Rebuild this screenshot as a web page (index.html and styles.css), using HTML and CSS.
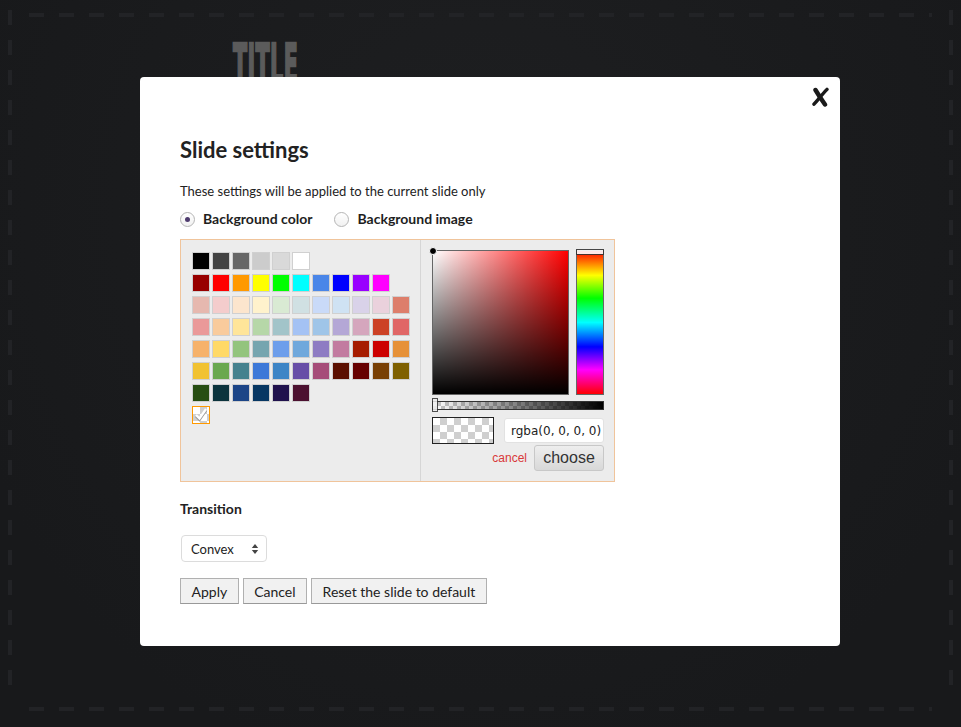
FILE: index.html
```html
<!DOCTYPE html>
<html lang="en">
<head>
<meta charset="UTF-8">
<meta name="viewport" content="width=device-width, initial-scale=1.0">
<title>Slide settings</title>
<link rel="stylesheet" href="styles.css">
</head>
<body>
  <div class="slide">
    <div class="slide-title">TITLE</div>
  </div>

  <div class="modal">
    <button class="modal-close" title="Close">
      <svg width="19" height="20" viewBox="0 0 19 20">
        <path d="M4.5 3 C7.5 8, 10.5 12.5, 14 17.5" stroke="#1a1a1a" stroke-width="4.4" stroke-linecap="round" fill="none"/>
        <path d="M16 2.4 C12 6.5, 8 11.5, 3 17.2" stroke="#1a1a1a" stroke-width="3.4" stroke-linecap="round" fill="none"/>
      </svg>
    </button>

    <h2 class="modal-title">Slide settings</h2>
    <p class="modal-hint">These settings will be applied to the current slide only</p>

    <div class="bg-options">
      <label class="bg-option"><span class="radio checked"></span>Background color</label>
      <label class="bg-option"><span class="radio"></span>Background image</label>
    </div>

    <div class="sp-container">
      <div class="sp-palette">
        <div class="sp-row">
          <span class="sp-thumb" style="background:#000000"></span>
          <span class="sp-thumb" style="background:#434343"></span>
          <span class="sp-thumb" style="background:#666666"></span>
          <span class="sp-thumb" style="background:#cccccc"></span>
          <span class="sp-thumb" style="background:#d9d9d9"></span>
          <span class="sp-thumb" style="background:#ffffff"></span>
        </div>
        <div class="sp-row">
          <span class="sp-thumb" style="background:#980000"></span>
          <span class="sp-thumb" style="background:#ff0000"></span>
          <span class="sp-thumb" style="background:#ff9900"></span>
          <span class="sp-thumb" style="background:#ffff00"></span>
          <span class="sp-thumb" style="background:#00ff00"></span>
          <span class="sp-thumb" style="background:#00ffff"></span>
          <span class="sp-thumb" style="background:#4a86e8"></span>
          <span class="sp-thumb" style="background:#0000ff"></span>
          <span class="sp-thumb" style="background:#9900ff"></span>
          <span class="sp-thumb" style="background:#ff00ff"></span>
        </div>
        <div class="sp-row">
          <span class="sp-thumb" style="background:#e6b8af"></span>
          <span class="sp-thumb" style="background:#f4cccc"></span>
          <span class="sp-thumb" style="background:#fce5cd"></span>
          <span class="sp-thumb" style="background:#fff2cc"></span>
          <span class="sp-thumb" style="background:#d9ead3"></span>
          <span class="sp-thumb" style="background:#d0e0e3"></span>
          <span class="sp-thumb" style="background:#c9daf8"></span>
          <span class="sp-thumb" style="background:#cfe2f3"></span>
          <span class="sp-thumb" style="background:#d9d2e9"></span>
          <span class="sp-thumb" style="background:#ead1dc"></span>
          <span class="sp-thumb" style="background:#dd7e6b"></span>
        </div>
        <div class="sp-row">
          <span class="sp-thumb" style="background:#ea9999"></span>
          <span class="sp-thumb" style="background:#f9cb9c"></span>
          <span class="sp-thumb" style="background:#ffe599"></span>
          <span class="sp-thumb" style="background:#b6d7a8"></span>
          <span class="sp-thumb" style="background:#a2c4c9"></span>
          <span class="sp-thumb" style="background:#a4c2f4"></span>
          <span class="sp-thumb" style="background:#9fc5e8"></span>
          <span class="sp-thumb" style="background:#b4a7d6"></span>
          <span class="sp-thumb" style="background:#d5a6bd"></span>
          <span class="sp-thumb" style="background:#cc4125"></span>
          <span class="sp-thumb" style="background:#e06666"></span>
        </div>
        <div class="sp-row">
          <span class="sp-thumb" style="background:#f6b26b"></span>
          <span class="sp-thumb" style="background:#ffd966"></span>
          <span class="sp-thumb" style="background:#93c47d"></span>
          <span class="sp-thumb" style="background:#76a5af"></span>
          <span class="sp-thumb" style="background:#6d9eeb"></span>
          <span class="sp-thumb" style="background:#6fa8dc"></span>
          <span class="sp-thumb" style="background:#8e7cc3"></span>
          <span class="sp-thumb" style="background:#c27ba0"></span>
          <span class="sp-thumb" style="background:#a61c00"></span>
          <span class="sp-thumb" style="background:#cc0000"></span>
          <span class="sp-thumb" style="background:#e69138"></span>
        </div>
        <div class="sp-row">
          <span class="sp-thumb" style="background:#f1c232"></span>
          <span class="sp-thumb" style="background:#6aa84f"></span>
          <span class="sp-thumb" style="background:#45818e"></span>
          <span class="sp-thumb" style="background:#3c78d8"></span>
          <span class="sp-thumb" style="background:#3d85c6"></span>
          <span class="sp-thumb" style="background:#674ea7"></span>
          <span class="sp-thumb" style="background:#a64d79"></span>
          <span class="sp-thumb" style="background:#5b0f00"></span>
          <span class="sp-thumb" style="background:#660000"></span>
          <span class="sp-thumb" style="background:#783f04"></span>
          <span class="sp-thumb" style="background:#7f6000"></span>
        </div>
        <div class="sp-row">
          <span class="sp-thumb" style="background:#274e13"></span>
          <span class="sp-thumb" style="background:#0c343d"></span>
          <span class="sp-thumb" style="background:#1c4587"></span>
          <span class="sp-thumb" style="background:#073763"></span>
          <span class="sp-thumb" style="background:#20124d"></span>
          <span class="sp-thumb" style="background:#4c1130"></span>
        </div>
        <div class="sp-row">
          <span class="sp-thumb sp-thumb-active checker">
            <svg width="16" height="16" viewBox="0 0 16 16">
              <path d="M3 9 L6.5 12.5 L13 3" stroke="#999" stroke-width="3" fill="none"/>
              <path d="M3 8 L6.5 11.5 L13 2" stroke="#fff" stroke-width="2.4" fill="none"/>
            </svg>
          </span>
        </div>
      </div>

      <div class="sp-picker">
        <div class="sp-top">
          <div class="sp-color">
            <div class="sp-sat"></div>
            <span class="sp-dragger"></span>
          </div>
          <div class="sp-hue">
            <span class="sp-slider"></span>
          </div>
        </div>
        <div class="sp-alpha checker-small">
          <div class="sp-alpha-inner"></div>
          <span class="sp-alpha-handle"></span>
        </div>
        <div class="sp-input-row">
          <div class="sp-preview checker"></div>
          <input class="sp-input" type="text" value="rgba(0, 0, 0, 0)">
        </div>
        <div class="sp-buttons">
          <a class="sp-cancel" href="#">cancel</a>
          <button class="sp-choose">choose</button>
        </div>
      </div>
    </div>

    <h3 class="section-label">Transition</h3>
    <div class="select-box">
      <span>Convex</span>
      <svg width="8" height="12" viewBox="0 0 8 12">
        <path d="M4 1 L7.2 5 L0.8 5 Z" fill="#444"/>
        <path d="M4 11 L7.2 7 L0.8 7 Z" fill="#444"/>
      </svg>
    </div>

    <div class="actions">
      <button class="btn">Apply</button>
      <button class="btn">Cancel</button>
      <button class="btn">Reset the slide to default</button>
    </div>
  </div>
</body>
</html>
```

FILE: styles.css
```css
html, body {
  height: 100%;
}

body {
  margin: 0;
  font-family: Lato, "Open Sans", sans-serif;
  color: #222;
  overflow: hidden;
  background-color: #1a1b1d;
  /* dashed frame around the slide area + soft vignette */
  background-image:
    repeating-linear-gradient(to right, #222326 0 15px, transparent 15px 30px),
    repeating-linear-gradient(to right, #222326 0 15px, transparent 15px 30px),
    repeating-linear-gradient(to bottom, #222326 0 15px, transparent 15px 30px),
    repeating-linear-gradient(to bottom, #222326 0 15px, transparent 15px 30px),
    radial-gradient(ellipse at 50% 30%, #1e1f21 0%, #18191b 80%);
  background-size:
    calc(100% - 58px) 4px,
    calc(100% - 58px) 4px,
    4px calc(100% - 40px),
    4px calc(100% - 40px),
    100% 100%;
  background-position:
    29px 13px,
    29px 707px,
    8px 10px,
    calc(100% - 8px) 10px,
    0 0;
  background-repeat: no-repeat;
}

.slide {
  padding: 36px 0 0 233px;
}

.slide-title {
  display: inline-block;
  font-family: "DejaVu Sans Condensed", "DejaVu Sans", sans-serif;
  font-weight: bold;
  font-size: 56px;
  line-height: 56px;
  color: #5b5b5b;
  -webkit-text-stroke: 2.5px #5b5b5b;
  letter-spacing: 1px;
  transform: scaleX(0.41);
  transform-origin: left top;
}

/* modal sits over the slide */
.modal {
  position: absolute;
  left: 140px;
  top: 77px;
  width: 700px;
  height: 569px;
  box-sizing: border-box;
  padding: 60px 40px 0 40px;
  background: #fff;
  border-radius: 4px;
}

.modal-close {
  position: absolute;
  top: 10px;
  right: 10px;
  padding: 0;
  border: none;
  background: none;
  cursor: pointer;
}

.modal-title {
  margin: 0;
  font-size: 22px;
  line-height: 26px;
  font-weight: bold;
  color: #222;
}

.modal-hint {
  margin: 20px 0 0 0;
  font-size: 13px;
  line-height: 16px;
}

.bg-options {
  display: flex;
  gap: 22px;
  margin-top: 11px;
}

.bg-option {
  display: flex;
  align-items: center;
  gap: 8px;
  font-size: 14px;
  line-height: 18px;
  font-weight: bold;
  color: #1e1e1e;
}

.radio {
  width: 15px;
  height: 15px;
  box-sizing: border-box;
  border-radius: 50%;
  border: 1px solid #b5b5b5;
  background: linear-gradient(#fff, #f1f1f1);
  display: flex;
  align-items: center;
  justify-content: center;
}

.radio.checked::after {
  content: "";
  width: 5px;
  height: 5px;
  border-radius: 50%;
  background: #4e3b6e;
}

/* colour picker */
.sp-container {
  display: flex;
  width: 435px;
  margin-top: 11px;
  box-sizing: border-box;
  border: 1px solid #f0c49b;
  background: #ececec;
}

.sp-palette {
  width: 240px;
  box-sizing: border-box;
  padding: 12px 0 0 11px;
  border-right: 1px solid #d6d6d6;
  display: flex;
  flex-direction: column;
  gap: 4px;
  height: 241px;
}

.sp-row {
  display: flex;
  gap: 2px;
}

.sp-thumb {
  width: 18px;
  height: 18px;
  box-sizing: border-box;
  border: 1px solid #d0d0d0;
  display: flex;
  align-items: center;
  justify-content: center;
}

.sp-thumb-active {
  border-color: #f90;
}

.checker {
  background-color: #fff;
  background-image: conic-gradient(#cfcfcf 25%, transparent 0 50%, #cfcfcf 0 75%, transparent 0);
  background-size: 14px 14px;
}

.checker-small {
  background-color: #fff;
  background-image: conic-gradient(#c8c8c8 25%, transparent 0 50%, #c8c8c8 0 75%, transparent 0);
  background-size: 8px 8px;
}

.sp-picker {
  flex: 1;
  padding: 10px 10px 10px 11px;
  box-sizing: border-box;
}

.sp-top {
  display: flex;
  gap: 7px;
}

.sp-color {
  position: relative;
  width: 137px;
  height: 145px;
  box-sizing: border-box;
  border: 1px solid #666;
  background: #f00;
}

.sp-sat {
  width: 100%;
  height: 100%;
  background:
    linear-gradient(to top, #000, rgba(0, 0, 0, 0)),
    linear-gradient(to right, #fff, rgba(255, 255, 255, 0));
}

.sp-dragger {
  position: absolute;
  left: -4px;
  top: -4px;
  width: 6px;
  height: 6px;
  border-radius: 50%;
  background: #000;
  border: 1px solid #fff;
}

.sp-hue {
  position: relative;
  width: 28px;
  height: 145px;
  box-sizing: border-box;
  border: 1px solid #666;
  background: linear-gradient(to bottom, #f00 0%, #ff0 17%, #0f0 33%, #0ff 50%, #00f 67%, #f0f 83%, #f00 100%);
}

.sp-slider {
  position: absolute;
  left: -1px;
  right: -1px;
  top: -2px;
  height: 4px;
  background: #fff;
  border: 1px solid #333;
  opacity: 0.9;
}

.sp-alpha {
  position: relative;
  margin-top: 6px;
  height: 9px;
  box-sizing: border-box;
  border: 1px solid #333;
}

.sp-alpha-inner {
  height: 100%;
  background: linear-gradient(to right, rgba(0, 0, 0, 0), #000);
}

.sp-alpha-handle {
  position: absolute;
  left: -1px;
  top: -4px;
  width: 6px;
  height: 14px;
  box-sizing: border-box;
  border: 1px solid #333;
  background: #eee;
  opacity: 0.85;
}

.sp-input-row {
  display: flex;
  justify-content: space-between;
  align-items: flex-start;
  margin-top: 7px;
}

.sp-preview {
  width: 62px;
  height: 27px;
  box-sizing: border-box;
  border: 1px solid #222;
}

.sp-input {
  width: 100px;
  height: 25px;
  box-sizing: border-box;
  margin: 1px 0 0 0;
  padding: 0 0 0 6px;
  border: 1px solid #e2e2e2;
  border-radius: 3px;
  background: #fff;
  font-family: "DejaVu Sans", sans-serif;
  font-size: 12px;
  color: #222;
  outline: none;
}

.sp-buttons {
  display: flex;
  justify-content: flex-end;
  align-items: center;
  gap: 7px;
  margin-top: 1px;
}

.sp-cancel {
  font-family: "Liberation Sans", sans-serif;
  font-size: 12px;
  color: #d9383a;
  text-decoration: none;
}

.sp-choose {
  width: 70px;
  height: 26px;
  padding: 0;
  border: 1px solid #c8c8c8;
  border-radius: 3px;
  background: linear-gradient(#eeeeee, #d8d8d8);
  font-family: "Liberation Sans", sans-serif;
  font-size: 16px;
  color: #333;
}

.section-label {
  margin: 18px 0 0 0;
  font-size: 14px;
  line-height: 18px;
  font-weight: bold;
}

.select-box {
  display: flex;
  align-items: center;
  justify-content: space-between;
  width: 86px;
  height: 27px;
  box-sizing: border-box;
  margin: 17px 0 0 1px;
  padding: 0 7px 0 9px;
  border: 1px solid #dcdcdc;
  border-radius: 4px;
  background: #fff;
  font-size: 13px;
  color: #222;
}

.actions {
  display: flex;
  gap: 4px;
  margin-top: 16px;
}

.btn {
  height: 26px;
  padding: 0 10.5px;
  border: 1px solid #b0b0b0;
  border-bottom-color: #999;
  border-radius: 0;
  background: #f1f1f1;
  font-family: Lato, sans-serif;
  font-size: 14px;
  color: #222;
  cursor: pointer;
}
```
